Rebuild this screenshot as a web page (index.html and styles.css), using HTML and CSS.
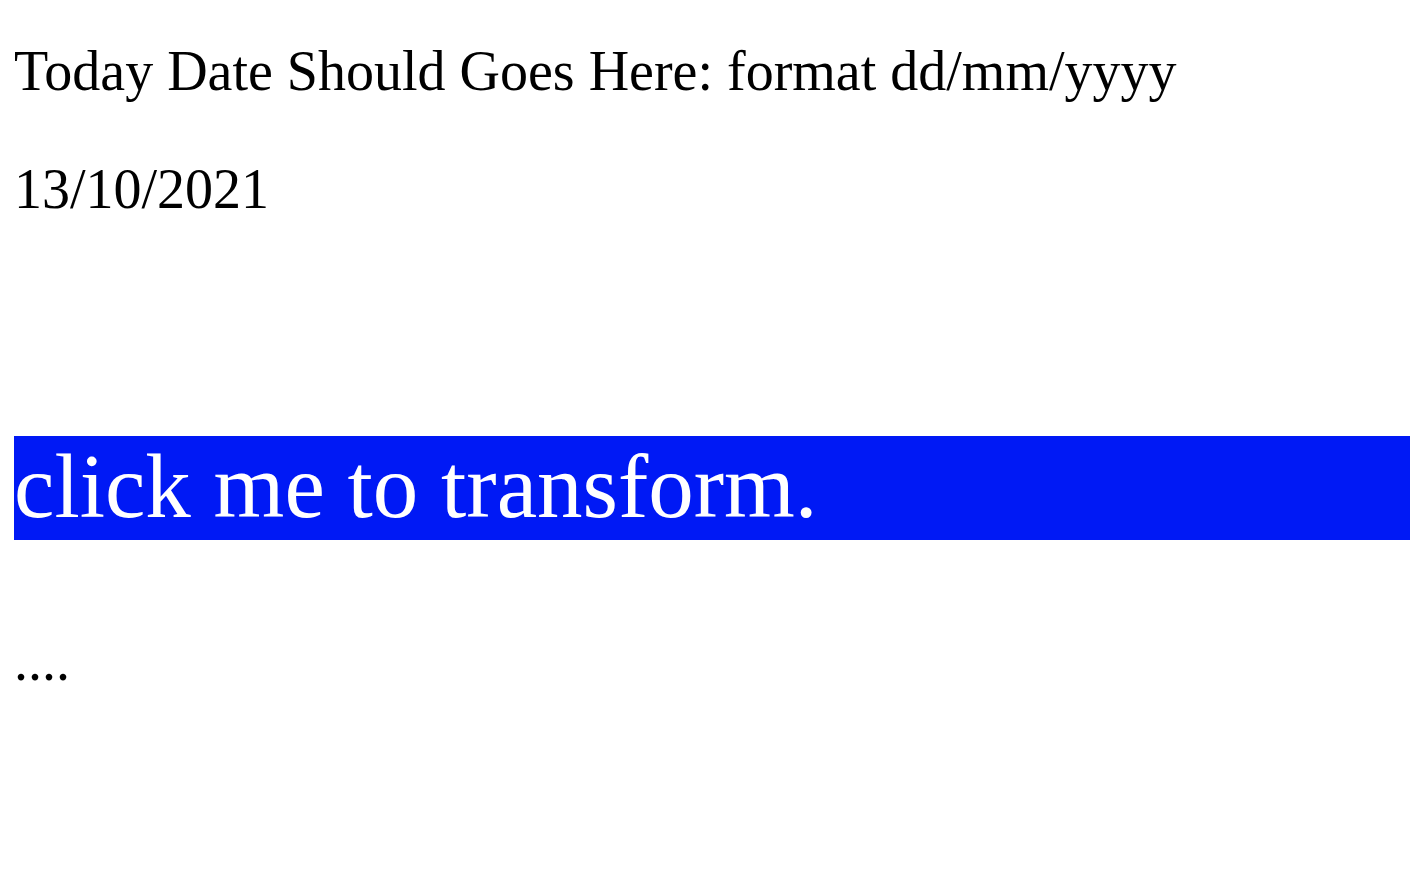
FILE: index.html
```html
<!DOCTYPE html>
<html lang="en">
<head>
<meta charset="utf-8">
<title>Today Date</title>
<link rel="stylesheet" href="styles.css">
</head>
<body>
<main class="page">
  <p class="label">Today Date Should Goes Here: format dd/mm/yyyy</p>
  <p class="date">13/10/2021</p>
  <div class="transform">click me to transform.</div>
  <p class="dots">....</p>
</main>
</body>
</html>
```
FILE: styles.css
```css
html, body {
  margin: 0;
  padding: 0;
  background: #ffffff;
}

.page {
  display: flex;
  flex-direction: column;
  padding-left: 14px;
  font-family: "Liberation Serif", "Times New Roman", serif;
  color: #000000;
}

.label,
.date,
.dots {
  margin: 0;
  font-size: 56px;
  line-height: 64px;
}

.label {
  margin-top: 39px;
}

.date {
  margin-top: 54px;
}

.transform {
  margin-top: 215px;
  height: 104px;
  background: #0019f5;
  color: #ffffff;
  font-size: 91px;
  line-height: 102px;
  white-space: nowrap;
}

.dots {
  margin-top: 89px;
}
```
